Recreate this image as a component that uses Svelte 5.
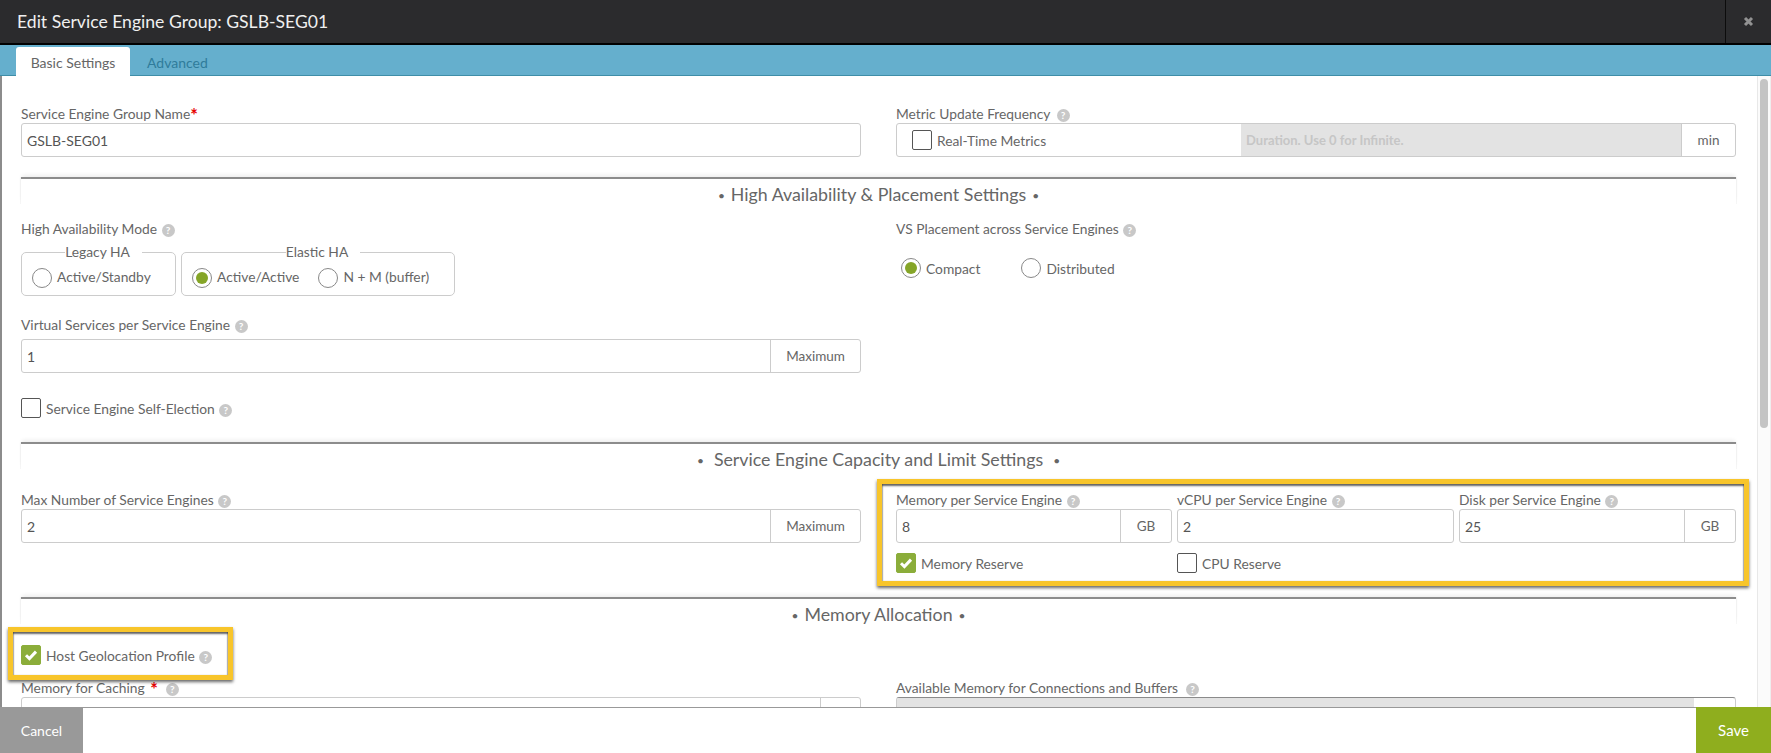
<script>
  const help = '?';
</script>

<div class="modal">
  <header class="head">
    <h1>Edit Service Engine Group: GSLB-SEG01</h1>
    <button class="close" aria-label="Close">
      <svg width="11" height="11" viewBox="0 0 11 11"><path d="M2 2l7 7M9 2l-7 7" stroke="#929292" stroke-width="3" fill="none"/></svg>
    </button>
  </header>
  <nav class="tabs">
    <span class="tab active">Basic Settings</span>
    <span class="tab">Advanced</span>
  </nav>

  <div class="body">
    <main class="scroll">
      <div class="grid two">
        <div>
          <div class="label">Service Engine Group Name<span class="req">*</span></div>
          <div class="group"><input class="txt" value="GSLB-SEG01" readonly /></div>
        </div>
        <div>
          <div class="label">Metric Update Frequency <span class="help wide">{help}</span></div>
          <div class="group">
            <div class="rt">
              <span class="box"></span><span class="check-text">Real-Time Metrics</span>
            </div>
            <input class="txt off" placeholder="Duration. Use 0 for Infinite." disabled />
            <span class="addon min">min</span>
          </div>
        </div>
      </div>

      <section class="sec s1"><span class="dot">•</span>High Availability &amp; Placement Settings<span class="dot">•</span></section>

      <div class="grid two">
        <div>
          <div class="label">High Availability Mode <span class="help">{help}</span></div>
          <div class="modes">
            <fieldset class="legacy">
              <legend>Legacy HA</legend>
              <span class="radio"></span><span class="radio-text">Active/Standby</span>
            </fieldset>
            <fieldset class="elastic">
              <legend>Elastic HA</legend>
              <span class="radio on"></span><span class="radio-text r-gap">Active/Active</span>
              <span class="radio"></span><span class="radio-text">N + M (buffer)</span>
            </fieldset>
          </div>
          <div class="label vs">Virtual Services per Service Engine <span class="help">{help}</span></div>
          <div class="group tight"><input class="txt" value="1" readonly /><span class="addon max">Maximum</span></div>
          <div class="checkrow self"><span class="box"></span><span class="check-text">Service Engine Self-Election <span class="help">{help}</span></span></div>
        </div>
        <div>
          <div class="label">VS Placement across Service Engines <span class="help">{help}</span></div>
          <div class="place">
            <span class="radio on"></span><span class="radio-text c-gap">Compact</span>
            <span class="radio"></span><span class="radio-text">Distributed</span>
          </div>
        </div>
      </div>

      <section class="sec s2"><span class="dot wide">•</span>Service Engine Capacity and Limit Settings<span class="dot wide">•</span></section>

      <div class="grid two">
        <div>
          <div class="label">Max Number of Service Engines <span class="help">{help}</span></div>
          <div class="group"><input class="txt" value="2" readonly /><span class="addon max">Maximum</span></div>
        </div>
        <div class="triple marked">
          <div>
            <div class="label">Memory per Service Engine <span class="help">{help}</span></div>
            <div class="group"><input class="txt" value="8" readonly /><span class="addon gb">GB</span></div>
          </div>
          <div>
            <div class="label">vCPU per Service Engine <span class="help">{help}</span></div>
            <div class="group"><input class="txt" value="2" readonly /></div>
          </div>
          <div>
            <div class="label">Disk per Service Engine <span class="help">{help}</span></div>
            <div class="group"><input class="txt" value="25" readonly /><span class="addon gb">GB</span></div>
          </div>
          <div class="checkrow">
            <span class="box checked"><svg width="14" height="12" viewBox="0 0 14 12"><path d="M2 6.2l3.4 3.4L12 2.6" stroke="#fff" stroke-width="3" fill="none"/></svg></span>
            <span class="check-text">Memory Reserve</span>
          </div>
          <div class="checkrow"><span class="box"></span><span class="check-text">CPU Reserve</span></div>
        </div>
      </div>

      <section class="sec s3"><span class="dot">•</span>Memory Allocation<span class="dot">•</span></section>

      <div class="checkrow host marked-host">
        <span class="box checked"><svg width="14" height="12" viewBox="0 0 14 12"><path d="M2 6.2l3.4 3.4L12 2.6" stroke="#fff" stroke-width="3" fill="none"/></svg></span>
        <span class="check-text">Host Geolocation Profile <span class="help">{help}</span></span>
      </div>

      <div class="grid two last">
        <div>
          <div class="label">Memory for Caching <span class="req sm">*</span> &nbsp;<span class="help">{help}</span></div>
          <div class="group"><input class="txt" readonly /><span class="addon end"></span></div>
        </div>
        <div>
          <div class="label">Available Memory for Connections and Buffers &nbsp;<span class="help">{help}</span></div>
          <div class="group dark"><input class="txt off" disabled /><span class="addon end2"></span></div>
        </div>
      </div>
    </main>
    <aside class="track"><div class="thumb"></div></aside>
  </div>

  <footer class="foot">
    <button class="btn cancel">Cancel</button>
    <button class="btn save">Save</button>
  </footer>
</div>

<style>
  :global(body) { margin: 0; background: #fff; }
  * { box-sizing: border-box; }
  .modal {
    height: 100vh; display: flex; flex-direction: column; overflow: hidden;
    font-family: Lato, "Open Sans", sans-serif; font-size: 13.8px; color: #666;
  }
  .head {
    height: 45px; flex: none; background: #2b2b2d; border-bottom: 2px solid #000;
    display: flex; align-items: center; justify-content: space-between;
  }
  .head h1 { margin: 0 0 0 17px; font-size: 17.6px; font-weight: 400; color: #f0f0f0; }
  .close {
    width: 46px; height: 43px; background: none; border: 0; border-left: 1px solid #0c0c0c;
    display: flex; align-items: center; justify-content: center; padding: 0;
  }
  .tabs {
    height: 31px; flex: none; background: #65afcd; border-bottom: 1px solid #3f8ea8;
    display: flex; align-items: flex-end; padding-left: 16px;
  }
  .tab { height: 29px; line-height: 31px; text-align: center; color: #2f7c9b; font-size: 14px; margin-bottom: -1px; padding: 0 17px; }
  .tab.active { width: 114px; padding: 0; background: #fff; color: #666; border-radius: 3px 3px 0 0; }
  .body { flex: 1; min-height: 0; display: flex; border-left: 2px solid #8c8c8c; }
  .scroll { flex: 1; min-width: 0; overflow: hidden; padding: 29px 21px 0 19px; }
  .track { width: 14px; flex: none; border-left: 1px solid #e8e8e8; border-right: 1px solid #eee; padding: 3px 0 0 2px; background: #fbfbfb; }
  .thumb { width: 8px; height: 349px; border-radius: 4px; background: #c4c4c4; }

  .grid.two { display: grid; grid-template-columns: 1fr 1fr; gap: 35px; }
  .label { line-height: 18px; height: 18px; white-space: nowrap; }
  .req { color: #e60000; font-weight: 700; font-size: 18px; line-height: 14px; vertical-align: -3px; }
  .req.sm { margin-left: 2px; }
  .help {
    display: inline-block; width: 13px; height: 13px; border-radius: 50%; background: #c8c8c8; color: #fff;
    font-size: 10px; font-weight: 700; line-height: 13px; text-align: center; margin-left: 1px; vertical-align: 0;
  }
  .help.wide { margin-left: 3px; }

  .group {
    display: flex; height: 34px; border: 1px solid #ccc; border-radius: 3px; background: #fff; overflow: hidden;
  }
  .group.tight { margin-top: 5px; }
  .group.dark { border-top-color: #8a8a8a; }
  .txt {
    flex: 1; min-width: 0; border: 0; outline: 0; padding: 0 5px; background: transparent;
    font: 400 14px Lato, sans-serif; color: #555;
  }
  .txt.off { background: #e3e3e3; font-weight: 700; font-size: 13px; }
  .txt.off::placeholder { color: #c6c6c6; opacity: 1; }
  .addon {
    flex: none; display: flex; align-items: center; justify-content: center;
    border-left: 1px solid #ccc; font-size: 13.5px;
  }
  .addon.min { width: 54px; }
  .addon.max { width: 90px; }
  .addon.gb { width: 51px; }
  .addon.end { width: 40px; }
  .addon.end2 { width: 41px; border-left: 0; }

  .rt { width: 344px; flex: none; display: flex; align-items: center; padding-left: 15px; }
  .box {
    width: 20px; height: 20px; flex: none; border: 1px solid #555; border-radius: 2px; background: #fff;
    display: inline-flex; align-items: center; justify-content: center;
  }
  .box.checked { background: #8bad3a; border-color: #8bad3a; }
  .check-text { margin-left: 5px; }
  .checkrow { display: flex; align-items: center; height: 20px; }
  .self { margin-top: 25px; }

  .radio {
    width: 20px; height: 20px; flex: none; border: 1px solid #888; border-radius: 50%; background: #fff; position: relative;
  }
  .radio.on::after {
    content: ""; position: absolute; inset: 3px; border-radius: 50%; background: #85a528;
  }
  .radio-text { margin-left: 5px; }
  .r-gap { margin-right: 19px; }
  .c-gap { margin-right: 41px; }

  .modes { display: flex; gap: 5px; margin-top: 5px; }
  fieldset {
    margin: 0; height: 53px; border: 1px solid #ccc; border-radius: 5px; padding: 0 0 0 10px;
    display: flex; align-items: center; min-width: 0;
  }
  fieldset .radio-text { margin-top: -3px; }
  legend { margin: 0 auto; padding: 0 6px; line-height: 18px; position: relative; left: -6px; }
  .legacy { width: 155px; }
  .elastic { width: 274px; }
  .vs { margin-top: 20px; }
  .place { display: flex; align-items: center; margin-top: 20px; padding-left: 5px; }

  .sec {
    height: 27px; border-top: 2px solid #8c8c8c; text-align: center;
    font-size: 17.8px; line-height: 31px; color: #666;
    box-shadow: 0 -3px 4px -1px rgba(0,0,0,.07), 1px 0 0 #f6f6f6, -1px 0 0 #f6f6f6;
  }
  .dot { font-size: 12px; margin: 0 6px; vertical-align: 1px; }
  .dot.wide { margin: 0 10px; }
  .s1 { margin-top: 20px; margin-bottom: 16px; }
  .s2 { margin-top: 24px; margin-bottom: 22px; }
  .s3 { margin-top: 24px; margin-bottom: 21px; }

  .triple { display: grid; grid-template-columns: 276px 277px 277px; column-gap: 5px; row-gap: 10px; }
  .marked { position: relative; }
  .marked::after, .marked-host::after {
    content: ""; position: absolute; pointer-events: none;
    border: 5px solid #f8c52b;
    box-shadow: 0 2px 3px rgba(0,0,0,.6), inset 0 2px 2px rgba(0,0,0,.6), inset 1px 0 1px rgba(0,0,0,.2), inset -1px 0 1px rgba(0,0,0,.2);
  }
  .marked::after { inset: -12px -13px -13px -19px; }
  .marked-host { position: relative; width: fit-content; }
  .marked-host::after { inset: -18px -21px -15px -13px; }
  .last { margin-top: 14px; }

  .foot {
    height: 46px; flex: none; display: flex; justify-content: space-between;
    border-top: 1px solid #999; background: #fff;
  }
  .btn { border: 0; padding: 0; margin-top: -1px; font: 14px Lato, sans-serif; color: #fff; }
  .cancel { width: 83px; background: #999; }
  .save { width: 75px; background: #8fae1e; font-size: 15px; }
</style>
